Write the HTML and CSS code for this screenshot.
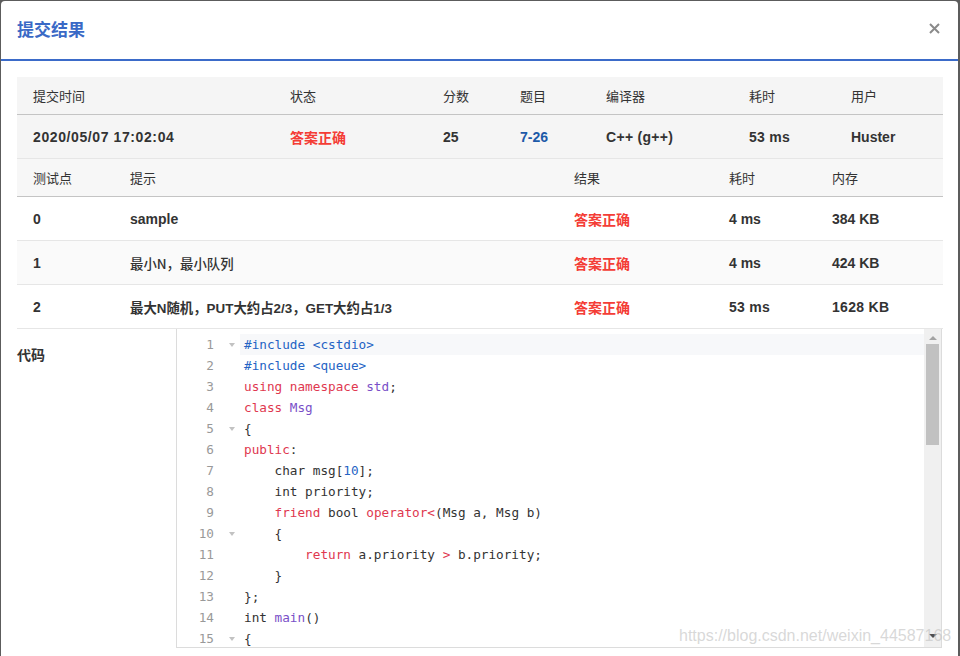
FILE: index.html
```html
<!DOCTYPE html>
<html lang="zh-CN">
<head>
<meta charset="utf-8">
<title>提交结果</title>
<link rel="stylesheet" href="styles.css">
</head>
<body>
<div class="modal">
  <div class="modal-header">
    <h2 class="title">提交结果</h2>
    <button class="close" aria-label="关闭">
      <svg width="11" height="11" viewBox="0 0 11 11"><path d="M1 1L10 10M10 1L1 10" stroke="#8a8a8a" stroke-width="2"/></svg>
    </button>
  </div>
  <div class="modal-body">
    <table class="t t-summary">
      <thead>
        <tr>
          <th class="c-time">提交时间</th>
          <th class="c-status">状态</th>
          <th class="c-score">分数</th>
          <th class="c-prob">题目</th>
          <th class="c-comp">编译器</th>
          <th class="c-cost">耗时</th>
          <th class="c-user">用户</th>
        </tr>
      </thead>
      <tbody>
        <tr class="shade">
          <td class="date">2020/05/07 17:02:04</td>
          <td class="ok">答案正确</td>
          <td>25</td>
          <td class="link">7-26</td>
          <td class="wide">C++ (g++)</td>
          <td class="wide">53 ms</td>
          <td>Huster</td>
        </tr>
      </tbody>
    </table>
    <table class="t t-cases">
      <thead>
        <tr>
          <th class="c-case">测试点</th>
          <th class="c-hint">提示</th>
          <th class="c-res">结果</th>
          <th class="c-time2">耗时</th>
          <th class="c-mem">内存</th>
        </tr>
      </thead>
      <tbody>
        <tr>
          <td>0</td>
          <td>sample</td>
          <td class="ok">答案正确</td>
          <td>4 ms</td>
          <td>384 KB</td>
        </tr>
        <tr class="light">
          <td>1</td>
          <td class="hint hint-medium">最小N，最小队列</td>
          <td class="ok">答案正确</td>
          <td>4 ms</td>
          <td>424 KB</td>
        </tr>
        <tr>
          <td>2</td>
          <td class="hint">最大N随机，PUT大约占2/3，GET大约占1/3</td>
          <td class="ok">答案正确</td>
          <td class="wide">53 ms</td>
          <td class="wide">1628 KB</td>
        </tr>
      </tbody>
    </table>
    <div class="code-row">
      <div class="code-label">代码</div>
      <div class="editor">
        <div class="lines">
          <div class="line"><span class="ln">1</span><span class="fold"><i class="arrow"></i></span><span class="code active"><span class="pp">#include &lt;cstdio&gt;</span></span></div>
          <div class="line"><span class="ln">2</span><span class="fold"></span><span class="code"><span class="pp">#include &lt;queue&gt;</span></span></div>
          <div class="line"><span class="ln">3</span><span class="fold"></span><span class="code"><span class="kw">using</span> <span class="kw">namespace</span> <span class="ty">std</span>;</span></div>
          <div class="line"><span class="ln">4</span><span class="fold"></span><span class="code"><span class="kw">class</span> <span class="ty">Msg</span></span></div>
          <div class="line"><span class="ln">5</span><span class="fold"><i class="arrow"></i></span><span class="code">{</span></div>
          <div class="line"><span class="ln">6</span><span class="fold"></span><span class="code"><span class="kw">public</span>:</span></div>
          <div class="line"><span class="ln">7</span><span class="fold"></span><span class="code">    char msg[<span class="num">10</span>];</span></div>
          <div class="line"><span class="ln">8</span><span class="fold"></span><span class="code">    int priority;</span></div>
          <div class="line"><span class="ln">9</span><span class="fold"></span><span class="code">    <span class="kw">friend</span> bool <span class="kw">operator&lt;</span>(Msg a, Msg b)</span></div>
          <div class="line"><span class="ln">10</span><span class="fold"><i class="arrow"></i></span><span class="code">    {</span></div>
          <div class="line"><span class="ln">11</span><span class="fold"></span><span class="code">        <span class="kw">return</span> a.priority <span class="kw">&gt;</span> b.priority;</span></div>
          <div class="line"><span class="ln">12</span><span class="fold"></span><span class="code">    }</span></div>
          <div class="line"><span class="ln">13</span><span class="fold"></span><span class="code">};</span></div>
          <div class="line"><span class="ln">14</span><span class="fold"></span><span class="code">int <span class="ty">main</span>()</span></div>
          <div class="line"><span class="ln">15</span><span class="fold"><i class="arrow"></i></span><span class="code">{</span></div>
        </div>
        <div class="scrollbar">
          <i class="sb-up"></i>
          <div class="sb-thumb"></div>
          <i class="sb-down"></i>
        </div>
      </div>
    </div>
  </div>
</div>
<div class="watermark">https://blog.csdn.net/weixin_44587168</div>
</body>
</html>
```
FILE: styles.css
```css
html, body {
  margin: 0;
  padding: 0;
}
body {
  background: #5c5c5c;
  width: 960px;
  height: 656px;
  overflow: hidden;
  position: relative;
  font-family: "Liberation Sans", "Noto Sans CJK SC", sans-serif;
  color: #333;
}
.modal {
  margin: 1px 2px 0 1px;
  height: 655px;
  background: #fff;
  border-radius: 4px 4px 0 0;
  overflow: hidden;
}
.modal-header {
  height: 58px;
  border-bottom: 2px solid #3b6bc9;
  display: flex;
  align-items: center;
  justify-content: space-between;
  padding: 0 16px 0 16px;
}
.title {
  margin: 0 0 3px 0;
  font-size: 17px;
  font-weight: bold;
  color: #3a69c6;
  font-family: "Noto Sans CJK SC", sans-serif;
}
.close {
  border: 0;
  background: none;
  padding: 0;
  margin: 0 2px 3px 0;
  width: 11px;
  height: 11px;
  display: flex;
}
.modal-body {
  padding: 16px 14px 0 16px;
}
.t {
  width: 926px;
  border-collapse: collapse;
  table-layout: fixed;
}
.t th {
  height: 37px;
  padding: 0 0 0 16px;
  text-align: left;
  font-weight: normal;
  font-size: 13px;
  color: #333;
  border-bottom: 1px solid #c4c4c4;
  font-family: "Noto Sans CJK SC", sans-serif;
}
.t td {
  height: 43px;
  padding: 0 0 0 16px;
  font-size: 14px;
  font-weight: bold;
  color: #333;
  border-bottom: 1px solid #e6e6e6;
  white-space: nowrap;
}
.t td.date {
  letter-spacing: 0.6px;
}
.t td.wide {
  letter-spacing: 0.3px;
}
.t td.hint {
  font-size: 13.4px;
}
.t td.hint-medium {
  font-weight: 500;
  font-family: "Noto Sans CJK SC", sans-serif;
}
.t-summary thead tr, .t-summary .shade {
  background: #f5f5f5;
}
.t-cases thead tr {
  background: #f7f7f7;
}
.t-cases .light {
  background: #fafafa;
}
.c-time { width: 241px; }
.c-status { width: 137px; }
.c-score { width: 61px; }
.c-prob { width: 70px; }
.c-comp { width: 127px; }
.c-cost { width: 86px; }
.c-user { width: 92px; }
.c-case { width: 81px; }
.c-hint { width: 428px; }
.c-res { width: 139px; }
.c-time2 { width: 87px; }
.c-mem { width: 111px; }
.ok { color: #f43d36 !important; font-family: "Noto Sans CJK SC", sans-serif; }
.link { color: #1d5aa8 !important; }

.code-row {
  display: flex;
}
.code-label {
  width: 159px;
  padding-top: 15px;
  font-size: 14px;
  font-weight: bold;
  font-family: "Noto Sans CJK SC", sans-serif;
}
.editor {
  width: 764px;
  height: 318px;
  border: 1px solid #dcdcdc;
  border-top: 0;
  display: flex;
  overflow: hidden;
}
.lines {
  flex: 1;
  padding-top: 5px;
  font-family: "DejaVu Sans Mono", monospace;
  font-size: 12.7px;
}
.line {
  display: flex;
  height: 21px;
  line-height: 21px;
}
.ln {
  width: 37px;
  text-align: right;
  color: #999;
}
.fold {
  width: 26px;
  display: flex;
  align-items: center;
  justify-content: flex-end;
  padding-right: 5px;
  box-sizing: border-box;
}
.arrow {
  width: 0;
  height: 0;
  border-left: 3px solid transparent;
  border-right: 3px solid transparent;
  border-top: 4px solid #c2c2c2;
}
.code {
  flex: 1;
  padding-left: 4px;
  white-space: pre;
  color: #333;
}
.code.active {
  background: #f7f8fa;
}
.pp { color: #2463c4; }
.kw { color: #e0384f; }
.ty { color: #7a4fc8; }
.num { color: #2463c4; }

.scrollbar {
  width: 17px;
  background: #f0f0f0;
  display: flex;
  flex-direction: column;
  align-items: center;
}
.sb-up {
  margin-top: 7px;
  width: 0;
  height: 0;
  border-left: 4px solid transparent;
  border-right: 4px solid transparent;
  border-bottom: 4px solid #a3a3a3;
}
.sb-thumb {
  margin-top: 4px;
  width: 13px;
  height: 101px;
  background: #c1c1c1;
}
.sb-down {
  margin-top: auto;
  margin-bottom: 9px;
  width: 0;
  height: 0;
  border-left: 4px solid transparent;
  border-right: 4px solid transparent;
  border-top: 4px solid #505050;
}
.watermark {
  position: absolute;
  left: 679px;
  top: 627px;
  font-size: 16px;
  font-family: "Liberation Sans", sans-serif;
  color: rgba(190, 190, 190, 0.6);
  white-space: nowrap;
}
```
